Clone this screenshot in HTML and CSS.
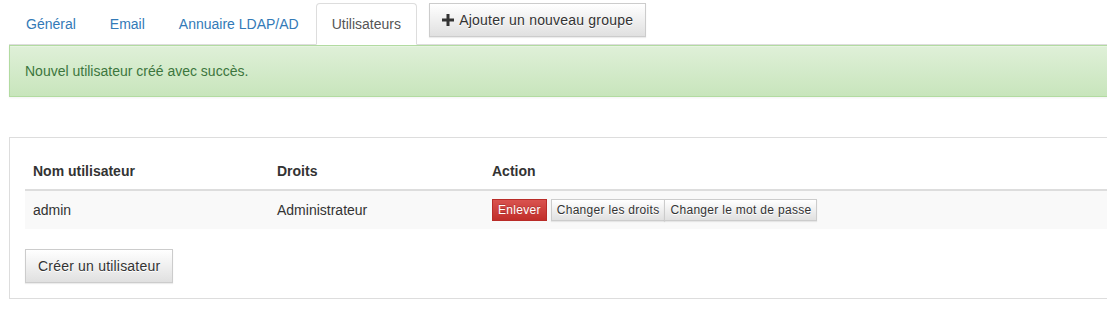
FILE: index.html
```html
<!DOCTYPE html>
<html lang="fr">
<head>
  <meta charset="UTF-8" />
  <title>Utilisateurs</title>
  <link rel="stylesheet" href="styles.css">
</head>
<body>
  <div class="page">
    <ul class="nav-tabs">
      <li><a href="#">Général</a></li>
      <li><a href="#">Email</a></li>
      <li><a href="#">Annuaire LDAP/AD</a></li>
      <li class="active"><a href="#">Utilisateurs</a></li>
      <li class="tab-action">
        <button class="btn btn-default">
          <svg class="icon-plus" width="12" height="12" viewBox="0 0 12 12"><path d="M4.5 0h3v4.5H12v3H7.5V12h-3V7.5H0v-3h4.5z" fill="#333"/></svg>
          Ajouter un nouveau groupe
        </button>
      </li>
    </ul>

    <div class="alert-success">Nouvel utilisateur créé avec succès.</div>

    <div class="panel">
      <table class="users">
        <thead>
          <tr>
            <th class="col-name">Nom utilisateur</th>
            <th class="col-rights">Droits</th>
            <th>Action</th>
          </tr>
        </thead>
        <tbody>
          <tr>
            <td>admin</td>
            <td>Administrateur</td>
            <td>
              <button class="btn btn-xs btn-danger">Enlever</button>
              <span class="btn-group"><button class="btn btn-xs btn-default">Changer les droits</button><button class="btn btn-xs btn-default">Changer le mot de passe</button></span>
            </td>
          </tr>
        </tbody>
      </table>
      <button class="btn btn-default">Créer un utilisateur</button>
    </div>
  </div>
</body>
</html>
```

FILE: styles.css
```css
    html, body {
      margin: 0;
      padding: 0;
      background: #fff;
      overflow: hidden;
    }

    body {
      font-family: "Liberation Sans", Arial, sans-serif;
      font-size: 14px;
      line-height: 20px;
      color: #333;
    }

    .page {
      width: 1160px;
      padding: 3px 0 0 9px;
    }

    .nav-tabs {
      display: flex;
      align-items: flex-start;
      list-style: none;
      margin: 0;
      padding: 0 0 0 1px;
      border-bottom: 1px solid #ddd;
    }

    .nav-tabs li {
      margin-bottom: -1px;
      margin-right: 2px;
    }

    .nav-tabs a {
      display: block;
      padding: 10px 15px;
      color: #337ab7;
      text-decoration: none;
      border: 1px solid transparent;
      border-radius: 4px 4px 0 0;
    }

    .nav-tabs .active {
      margin-left: -1px;
    }

    .nav-tabs .active a {
      color: #555;
      background: #fff;
      border-color: #ddd #ddd transparent;
    }

    .nav-tabs .tab-action {
      margin-left: 10px;
    }

    .btn {
      font-family: inherit;
      font-size: 14px;
      line-height: 20px;
      letter-spacing: 0.2px;
      padding: 6px 12px;
      border: 1px solid #ccc;
      border-radius: 0;
      color: #333;
      cursor: pointer;
      vertical-align: middle;
    }

    .btn-default {
      background: linear-gradient(to bottom, #fff 0, #e0e0e0 100%);
      border-color: #ccc;
      text-shadow: 0 1px 0 #fff;
      box-shadow: inset 0 1px 0 rgba(255, 255, 255, .15), 0 1px 1px rgba(0, 0, 0, .075);
    }

    .icon-plus {
      vertical-align: -1px;
      margin-right: 2px;
    }

    .btn-xs {
      font-size: 12px;
      line-height: 18px;
      letter-spacing: 0.3px;
      padding: 1px 5px;
    }

    .btn-danger {
      color: #fff;
      background: linear-gradient(to bottom, #d9534f 0, #c12e2a 100%);
      border-color: #b92c28;
      text-shadow: 0 -1px 0 rgba(0, 0, 0, .2);
    }

    .btn-group {
      display: inline-flex;
    }

    .btn-group .btn + .btn {
      margin-left: -1px;
    }

    .alert-success {
      padding: 15px;
      color: #3c763d;
      background: linear-gradient(to bottom, #dff0d8 0, #c8e5bc 100%);
      border: 1px solid #b2dba1;
      box-shadow: inset 0 1px 0 rgba(255, 255, 255, .25), 0 1px 2px rgba(0, 0, 0, .05);
    }

    .panel {
      margin-top: 40px;
      padding: 15px;
      border: 1px solid #ddd;
      background: #fff;
    }

    .users {
      width: 100%;
      border-collapse: collapse;
      margin-bottom: 20px;
    }

    .users th, .users td {
      text-align: left;
      padding: 8px;
      vertical-align: middle;
    }

    .users th {
      border-bottom: 2px solid #ddd;
    }

    .users td {
      border-top: 1px solid #ddd;
      background: #f9f9f9;
    }

    .col-name {
      width: 228px;
    }

    .col-rights {
      width: 199px;
    }
```
